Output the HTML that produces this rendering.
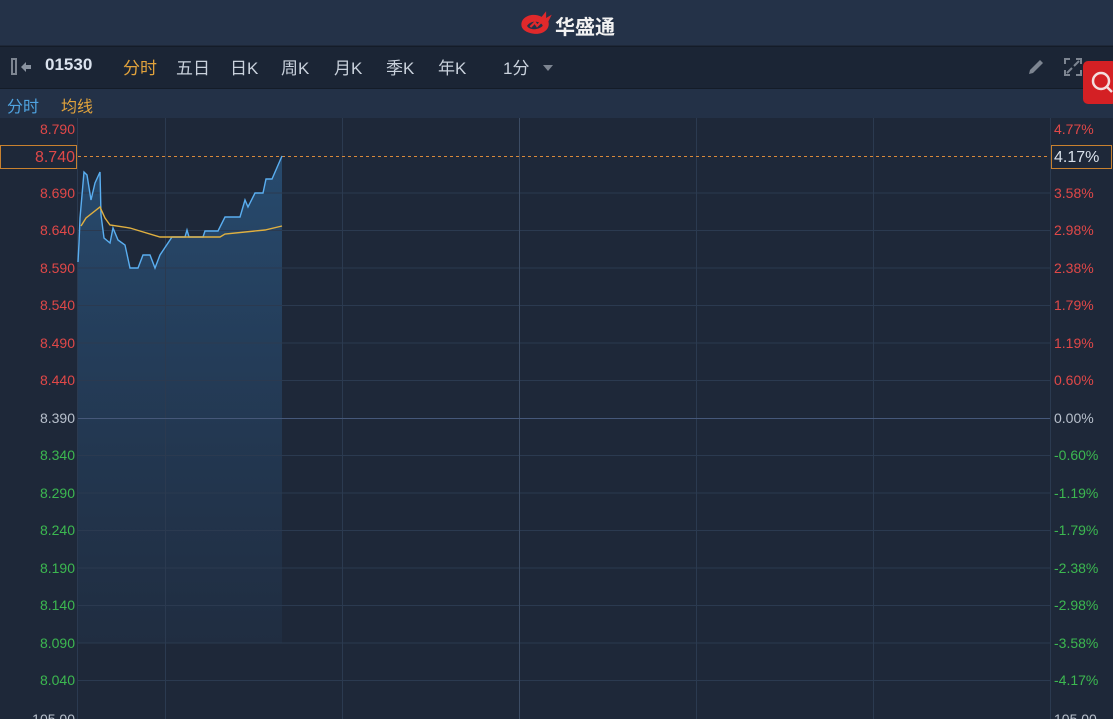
<!DOCTYPE html>
<html><head><meta charset="utf-8"><style>
body{margin:0;width:1113px;height:719px;overflow:hidden;background:#1e2839;font-family:"Liberation Sans","Noto Sans CJK SC",sans-serif;position:relative}
.top{position:absolute;left:0;top:0;width:1113px;height:45px;background:#243248}
.tb{position:absolute;left:0;top:46px;width:1113px;height:42px;background:#1b2535;border-top:1px solid #141c28}
.lg{position:absolute;left:0;top:88px;width:1113px;height:29px;background:#233147;border-top:1px solid #141c28}
.t{position:absolute;white-space:nowrap}
</style></head><body>
<div class="top"></div>
<svg style="position:absolute;left:518px;top:9px" width="36" height="27" viewBox="0 0 32 24"><path d="M3 14 C3 6 14 3 21 7 L25 2 L25 8 L30 5 L27 11 C29 18 22 23 14 22 C7 21 3 18 3 14 Z M8 15 C10 19 18 19 22 15 C21 11 12 9 8 15Z" fill="#e0292b" fill-rule="evenodd"/><path d="M11 16 L15 12 L17 15 L21 11" stroke="#e0292b" stroke-width="2" fill="none"/></svg>
<div class="t" style="left:555px;top:11px;font-size:20px;font-weight:bold;color:#f2f2f2">华盛通</div>
<div class="tb"></div>
<div class="t" style="left:11px;top:58px;width:6px;height:17px;border:2px solid #7d8591;box-sizing:border-box"></div>
<svg style="position:absolute;left:20px;top:61px" width="12" height="12" viewBox="0 0 12 12"><path d="M1 6 L6 1 V4 H11 V8 H6 V11 Z" fill="#8a93a0"/></svg>
<div class="t" style="left:45px;top:55px;color:#dbe3ee;font-size:17px;font-weight:bold">01530</div>
<div class="t" style="left:123px;top:54px;color:#e2a33c;font-size:17px">分时</div>
<div class="t" style="left:176px;top:54px;color:#c9d1dc;font-size:17px">五日</div>
<div class="t" style="left:230px;top:54px;color:#c9d1dc;font-size:17px">日K</div>
<div class="t" style="left:281px;top:54px;color:#c9d1dc;font-size:17px">周K</div>
<div class="t" style="left:334px;top:54px;color:#c9d1dc;font-size:17px">月K</div>
<div class="t" style="left:386px;top:54px;color:#c9d1dc;font-size:17px">季K</div>
<div class="t" style="left:438px;top:54px;color:#c9d1dc;font-size:17px">年K</div>
<div class="t" style="left:503px;top:54px;color:#c9d1dc;font-size:17px">1分</div>
<div class="t" style="left:543px;top:65px;width:0;height:0;border-left:5px solid transparent;border-right:5px solid transparent;border-top:6px solid #7d8591"></div>
<svg style="position:absolute;left:1025px;top:56px" width="22" height="22" viewBox="0 0 22 22"><path d="M4 18 L5 14 L15 4 L18 7 L8 17 Z" fill="#7d8591"/></svg>
<svg style="position:absolute;left:1063px;top:57px" width="20" height="20" viewBox="0 0 20 20" fill="none" stroke="#7d8591" stroke-width="2"><path d="M2 7V2H7M13 2H18V7M18 13V18H13M7 18H2V13M4 16L9 11M16 4L11 9"/></svg>
<div class="lg"></div>
<div class="t" style="left:7px;top:93px;color:#4fa3e0;font-size:16px">分时</div>
<div class="t" style="left:61px;top:93px;color:#e2a33c;font-size:16px">均线</div>
<div class="t" style="left:1083px;top:61px;width:34px;height:43px;background:#d42024;border-radius:5px"></div>
<svg style="position:absolute;left:1090px;top:70px" width="23" height="26" viewBox="0 0 23 26" fill="none" stroke="#f3dede" stroke-width="2.5"><circle cx="11" cy="11" r="8"/><path d="M17 17L22 22"/></svg>
<svg style="position:absolute;left:0;top:0" width="1113" height="719">
<defs><linearGradient id="g" x1="0" y1="0" x2="0" y2="1"><stop offset="0" stop-color="#2a5680" stop-opacity="0.75"/><stop offset="1" stop-color="#2a4a6e" stop-opacity="0.15"/></linearGradient></defs>
<path d="M78 262 L79 243 L80 218 L84 172 L87 175 L91 200 L95 183 L100 172 L101 215 L104 238 L110 243 L113 228 L118 240 L125 245 L130 268 L138 268 L143 255 L150 255 L155 268 L160 255 L170 240 L172 237 L185 237 L187 230 L189 237 L203 237 L205 231 L218 231 L225 217 L240 217 L245 200 L248 207 L255 193 L263 193 L266 179 L272 179 L282 156 L282 643 L78 643 Z" fill="url(#g)"/>
<g stroke="#2b3a50" stroke-width="1">
<line x1="77.5" y1="118" x2="77.5" y2="719"/><line x1="165.5" y1="118" x2="165.5" y2="719"/><line x1="342.5" y1="118" x2="342.5" y2="719"/><line x1="696.5" y1="118" x2="696.5" y2="719"/><line x1="873.5" y1="118" x2="873.5" y2="719"/><line x1="1050.5" y1="118" x2="1050.5" y2="719"/>
<line x1="78" y1="193" x2="1050" y2="193"/><line x1="78" y1="230.5" x2="1050" y2="230.5"/><line x1="78" y1="268" x2="1050" y2="268"/><line x1="78" y1="305.5" x2="1050" y2="305.5"/><line x1="78" y1="343" x2="1050" y2="343"/><line x1="78" y1="380.5" x2="1050" y2="380.5"/><line x1="78" y1="455.5" x2="1050" y2="455.5"/><line x1="78" y1="493" x2="1050" y2="493"/><line x1="78" y1="530.5" x2="1050" y2="530.5"/><line x1="78" y1="568" x2="1050" y2="568"/><line x1="78" y1="605.5" x2="1050" y2="605.5"/><line x1="78" y1="643" x2="1050" y2="643"/><line x1="78" y1="680.5" x2="1050" y2="680.5"/>
</g>
<line x1="519.5" y1="118" x2="519.5" y2="719" stroke="#3c4c64"/>
<line x1="78" y1="418.5" x2="1050" y2="418.5" stroke="#46587a"/>
<line x1="78" y1="156.5" x2="1050" y2="156.5" stroke="#d9893a" stroke-dasharray="3,3"/>
<path d="M78 262 L79 243 L80 218 L84 172 L87 175 L91 200 L95 183 L100 172 L101 215 L104 238 L110 243 L113 228 L118 240 L125 245 L130 268 L138 268 L143 255 L150 255 L155 268 L160 255 L170 240 L172 237 L185 237 L187 230 L189 237 L203 237 L205 231 L218 231 L225 217 L240 217 L245 200 L248 207 L255 193 L263 193 L266 179 L272 179 L282 156" fill="none" stroke="#5aaef0" stroke-width="1.4"/>
<path d="M81 226 L86 218 L100 207 L105 218 L110 225 L130 228 L160 237 L220 237 L225 234 L265 230 L282 226" fill="none" stroke="#e0b040" stroke-width="1.4"/>
<rect x="0.5" y="145.5" width="76" height="23" fill="#1e2839" stroke="#c8812f"/>
<rect x="1051.5" y="145.5" width="60" height="23" fill="#1e2839" stroke="#c8812f"/>
<g font-family="Liberation Sans, sans-serif" font-size="14" text-anchor="end">
<text x="75" y="134" fill="#e04848">8.790</text>
<text x="75" y="162" fill="#e04848" font-size="16">8.740</text>
<text x="75" y="198" fill="#e04848">8.690</text>
<text x="75" y="235" fill="#e04848">8.640</text>
<text x="75" y="273" fill="#e04848">8.590</text>
<text x="75" y="310" fill="#e04848">8.540</text>
<text x="75" y="348" fill="#e04848">8.490</text>
<text x="75" y="385" fill="#e04848">8.440</text>
<text x="75" y="423" fill="#b8c0cc">8.390</text>
<text x="75" y="460" fill="#3cb850">8.340</text>
<text x="75" y="498" fill="#3cb850">8.290</text>
<text x="75" y="535" fill="#3cb850">8.240</text>
<text x="75" y="573" fill="#3cb850">8.190</text>
<text x="75" y="610" fill="#3cb850">8.140</text>
<text x="75" y="648" fill="#3cb850">8.090</text>
<text x="75" y="685" fill="#3cb850">8.040</text>
<text x="75" y="724" fill="#b8c0cc">105.00</text>
</g>
<g font-family="Liberation Sans, sans-serif" font-size="14">
<text x="1054" y="134" fill="#e04848">4.77%</text>
<text x="1054" y="162" fill="#d8e0ea" font-size="16">4.17%</text>
<text x="1054" y="198" fill="#e04848">3.58%</text>
<text x="1054" y="235" fill="#e04848">2.98%</text>
<text x="1054" y="273" fill="#e04848">2.38%</text>
<text x="1054" y="310" fill="#e04848">1.79%</text>
<text x="1054" y="348" fill="#e04848">1.19%</text>
<text x="1054" y="385" fill="#e04848">0.60%</text>
<text x="1054" y="423" fill="#b8c0cc">0.00%</text>
<text x="1054" y="460" fill="#3cb850">-0.60%</text>
<text x="1054" y="498" fill="#3cb850">-1.19%</text>
<text x="1054" y="535" fill="#3cb850">-1.79%</text>
<text x="1054" y="573" fill="#3cb850">-2.38%</text>
<text x="1054" y="610" fill="#3cb850">-2.98%</text>
<text x="1054" y="648" fill="#3cb850">-3.58%</text>
<text x="1054" y="685" fill="#3cb850">-4.17%</text>
<text x="1054" y="724" fill="#b8c0cc">105.00</text>
</g>
</svg>
</body></html>
